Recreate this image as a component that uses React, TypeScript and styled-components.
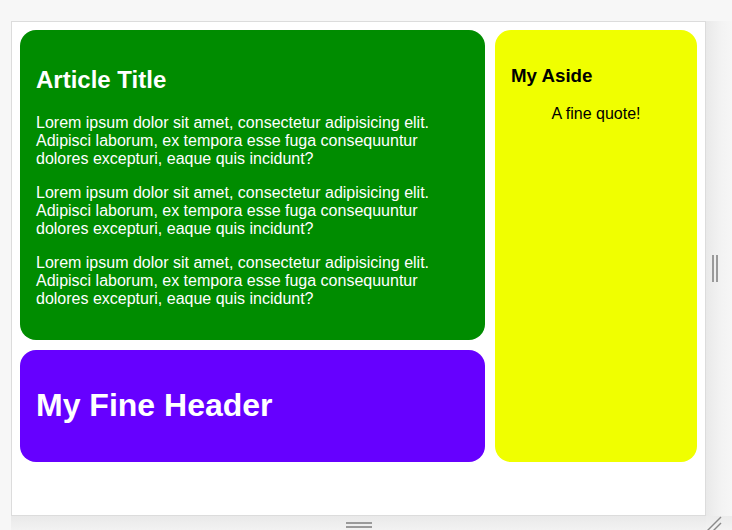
import React from "react";
import styled, { createGlobalStyle } from "styled-components";

const Global = createGlobalStyle`
  html, body { margin: 0; padding: 0; }
  body {
    background: #f7f7f7;
    font-family: "Liberation Sans", Arial, sans-serif;
    width: 732px;
    height: 530px;
    overflow: hidden;
  }
`;

const Stage = styled.div`
  display: grid;
  grid-template-columns: 695px 26px;
  grid-template-rows: 495px 14px;
  margin: 21px 0 0 11px;
`;

const Frame = styled.div`
  box-sizing: border-box;
  background: #ffffff;
  border: 1px solid #dcdcdc;
  padding: 8px;
`;

const Layout = styled.div`
  display: grid;
  grid-template-columns: 465px 202px;
  grid-template-areas:
    "main aside"
    "header aside";
  align-items: start;
  gap: 10px;
`;

const Card = styled.div<{ $bg: string; $fg: string; $area: string; $fill?: boolean }>`
  grid-area: ${(p) => p.$area};
  background: ${(p) => p.$bg};
  color: ${(p) => p.$fg};
  border-radius: 16px;
  padding: 16px;
  align-self: ${(p) => (p.$fill ? "stretch" : "start")};
  display: flow-root;
`;

const Title = styled.h2`
  font-size: 24px;
  font-weight: bold;
  margin: 19.92px 0;
`;

const Para = styled.p`
  font-size: 16px;
  margin: 16px 0;
  line-height: 18px;
`;

const BigHeader = styled.h1`
  font-size: 32px;
  font-weight: bold;
  margin: 21.44px 0;
`;

const AsideTitle = styled.h3`
  font-size: 18.72px;
  font-weight: bold;
  margin: 18.72px 0;
`;

const Quote = styled.p`
  font-size: 16px;
  margin: 0;
  text-align: center;
`;

const RightGutter = styled.div`
  background: linear-gradient(to right, #e9e9e9, #f3f3f3 60%, #f6f6f6);
  display: flex;
  align-items: center;
  padding-left: 6px;
  gap: 2px;
`;

const VBar = styled.span`
  width: 2px;
  height: 27px;
  background: #9a9a9a;
`;

const BottomGutter = styled.div`
  background: linear-gradient(to bottom, #e9e9e9, #f2f2f2);
  display: flex;
  flex-direction: column;
  align-items: center;
  padding-top: 6px;
  gap: 2px;
`;

const HBar = styled.span`
  width: 26px;
  height: 2px;
  background: #9a9a9a;
`;

const Corner = styled.div`
  background: linear-gradient(to bottom, #ebebeb, #f3f3f3);
  display: flex;
  align-items: flex-end;
  justify-content: flex-start;
`;

const lorem =
  "Lorem ipsum dolor sit amet, consectetur adipisicing elit. Adipisci laborum, ex tempora esse fuga consequuntur dolores excepturi, eaque quis incidunt?";

export default function App() {
  return (
    <>
      <Global />
      <Stage>
        <Frame>
          <Layout>
            <Card $bg="#008c00" $fg="#ffffff" $area="main">
              <Title>Article Title</Title>
              <Para>{lorem}</Para>
              <Para>{lorem}</Para>
              <Para>{lorem}</Para>
            </Card>
            <Card $bg="#6600ff" $fg="#ffffff" $area="header">
              <BigHeader>My Fine Header</BigHeader>
            </Card>
            <Card $bg="#f0ff00" $fg="#000000" $area="aside" $fill>
              <AsideTitle>My Aside</AsideTitle>
              <Quote>A fine quote!</Quote>
            </Card>
          </Layout>
        </Frame>
        <RightGutter>
          <VBar />
          <VBar />
        </RightGutter>
        <BottomGutter>
          <HBar />
          <HBar />
        </BottomGutter>
        <Corner>
          <svg width="26" height="14" viewBox="0 0 26 14">
            <line x1="1" y1="15" x2="15" y2="1" stroke="#8a8a8a" strokeWidth="1.4" />
            <line x1="7" y1="15" x2="15" y2="7" stroke="#8a8a8a" strokeWidth="1.4" />
          </svg>
        </Corner>
      </Stage>
    </>
  );
}
